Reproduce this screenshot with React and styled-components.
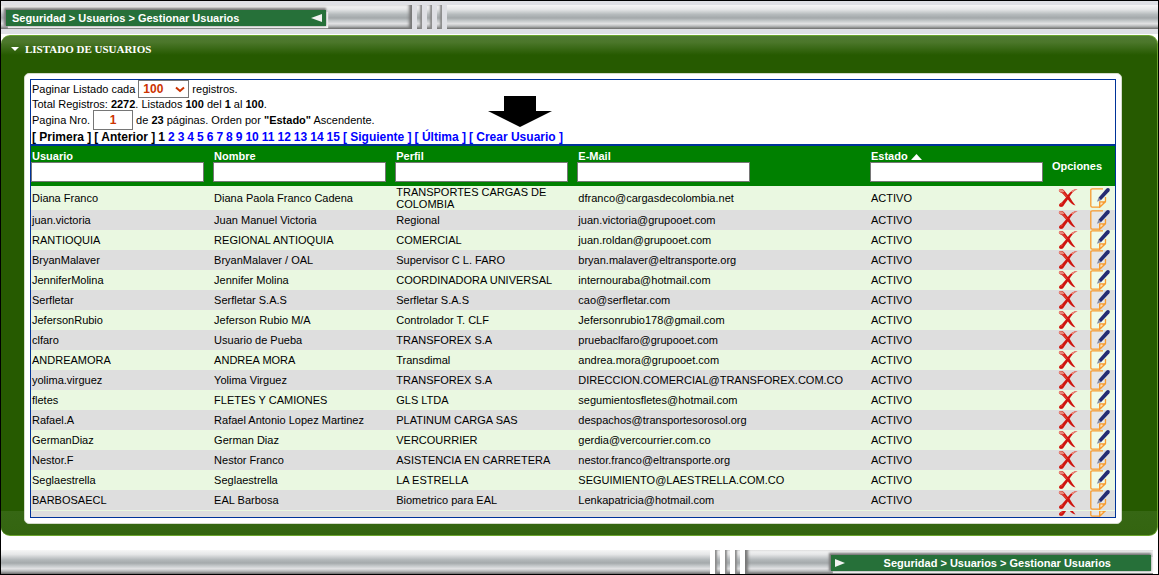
import React, { useState } from "react";
import styled, { createGlobalStyle, css } from "styled-components";

const GlobalStyle = createGlobalStyle`
  *, *::before, *::after { box-sizing: border-box; }
  body {
    margin: 0;
    background: #fff;
    color: #000;
    font: 11px/12px "Liberation Sans", Arial, sans-serif;
  }
`;

const Page = styled.div`
  border: 1px solid #000;
`;

const metal = css`
  background: linear-gradient(
    to bottom,
    #f6f6f6 0%,
    #e6e7e8 18%,
    #b4b9bb 40%,
    #a4a9ab 54%,
    #c4c8ca 66%,
    #e2e2e4 78%,
    #b8babb 88%,
    #6c6c6c 100%
  );
`;

const TopStrip = styled.header`
  display: flex;
  height: 33px;
  padding: 4px 0 5px;
  background: #dfe0e5;
`;

const BottomStrip = styled.footer`
  display: flex;
  height: 24px;
  padding-right: 5px;
`;

const shades = {
  none: "none",
  end: "inset -4px 0 3px -1px #777",
  start: "inset 4px 0 3px -1px #777",
};

const Bar = styled.div`
  ${metal}
  display: flex;
  align-items: flex-start;
  padding: 5px 0 0 5px;
  flex: ${(p) => (p.$width ? `0 0 ${p.$width}px` : "1 0 0")};
  box-shadow: ${(p) => shades[p.$shade || "none"]};
`;

const Ticks = styled.div`
  display: flex;
  gap: 5px;
  padding: 0 5px;
`;

const Tick = styled.span`
  ${metal}
  width: 5px;
  box-shadow: inset ${(p) => (p.$shade === "start" ? "2px" : "-2px")} 0 2px #8c8c8c;
`;

const Crumb = styled.nav`
  display: flex;
  align-items: center;
  justify-content: space-between;
  width: 320px;
  height: 16px;
  padding: ${(p) => (p.$bottom ? "0 40px 0 4px" : "0 3px 0 6px")};
  margin: ${(p) => (p.$bottom ? "0 2px 0 auto" : "0")};
  background: #267039;
  color: #fff;
  font-weight: bold;
  box-shadow: -1px -1px 2px 1px #777, 2px 2px 1px #f4f4f4;
`;

const Panel = styled.main`
  margin: 1px 0 14px;
  padding: 0 35px 11px 23px;
  border: solid #6ca52e;
  border-width: 1px 1px 1px 0;
  border-radius: 9px;
  background:
    linear-gradient(#366714, #346510) bottom / 100% 24px no-repeat,
    linear-gradient(#4f7a30 0, #4c772b 6px, #265a00 19px, #265a00);
`;

const PanelTitle = styled.h1`
  display: flex;
  align-items: center;
  gap: 6px;
  height: 37px;
  margin: 0 0 0 -13px;
  padding-bottom: 11px;
  color: #fff;
  font: bold 11px/12px "Liberation Serif", "Times New Roman", serif;
`;

const Card = styled.section`
  padding: 5px;
  border: 1px solid #d4dccb;
  border-radius: 5px;
  background: #fff;
`;

const Listing = styled.div`
  border: 1px solid #003399;
`;

const Line = styled.div`
  display: flex;
  align-items: center;
  height: ${(p) => p.$height}px;
  padding-left: 1px;
  white-space: pre;
`;

const SelectWrap = styled.span`
  position: relative;
  display: flex;
  margin: 0 3px;
  svg {
    position: absolute;
    right: 4px;
    top: 6px;
    pointer-events: none;
  }
`;

const PageSize = styled.select`
  appearance: none;
  width: 51px;
  height: 18px;
  padding: 0 4px;
  border: 1px solid #767676;
  border-radius: 0;
  background: #fff;
  color: #cc3300;
  font: bold 12px/14px "Liberation Sans", Arial, sans-serif;
`;

const PageNumber = styled.input`
  width: 40px;
  height: 20px;
  margin: 0 3px;
  padding: 0;
  border: 1px solid #767676;
  color: #cc3300;
  text-align: center;
  font: bold 12px/14px "Liberation Sans", Arial, sans-serif;
`;

const Pager = styled.nav`
  display: flex;
  gap: 3px;
  height: 14px;
  padding-left: 1px;
  font: bold 12px/14px "Liberation Sans", Arial, sans-serif;
  white-space: nowrap;
`;

const PagerLink = styled.a`
  position: relative;
  color: #0000ff;
  text-decoration: none;
`;

const Pointer = styled.svg`
  position: absolute;
  left: 19px;
  bottom: 17px;
`;

const Table = styled.table`
  width: 100%;
  table-layout: fixed;
  border-collapse: separate;
  border-spacing: 0;
  border-top: 2px solid #003399;
`;

const HeadCell = styled.th`
  height: 40px;
  padding: 4px 0;
  background: #008000;
  color: #fff;
  text-align: left;
  label { display: block; padding-left: 1px; }
`;

const OptionsHead = styled(HeadCell)`
  padding-left: 2px;
`;

const Filter = styled.input`
  display: block;
  width: calc(100% - 7px);
  max-width: 173px;
  height: 20px;
  padding: 1px 2px;
  border: 1px solid #767676;
  font: 11px/12px "Liberation Sans", Arial, sans-serif;
`;

const Row = styled.tr`
  height: 20px;
  background: #dedede;
  &:nth-child(odd) { background: #eaf8e1; }
`;

const Cell = styled.td`
  padding: 0 0 0 1px;
`;

const Actions = styled.div`
  display: flex;
  justify-content: flex-end;
  gap: 12px;
  height: 20px;
  padding-right: 5px;
`;

const IconButton = styled.button`
  width: 20px;
  height: 20px;
  padding: 0;
  border: 0;
  background: none;
  svg { display: block; }
`;

const CutCell = styled(Cell)`
  border-top: 1px solid #eaf8e1;
  background: #dedede;
`;

const Cut = styled.div`
  display: flex;
  flex-direction: column;
  justify-content: flex-end;
  height: 6px;
  overflow: hidden;
`;

const DeleteIcon = () => (
  <svg width="20" height="20" viewBox="0 0 20 20">
    <path fill="#cf1510" d="M.8 2.500C1.500.8 4.500.6 6 2.200L9.800 7c2.400-3.500 5.200-5.600 9.700-6-3.800 1.700-6.200 4.400-7.900 7.800 1.600 3 3.700 5.800 5.900 8.700-3.300-.4-5.700-3.300-7.600-5.900-1.900 2.200-3 4.300-4.400 6.200-1.300 1.800-4.700 1.500-4.500-.7.300-1.900 2-1.900 3.100-3L8 9.600 4.700 5.800C3.600 4.600 1.200 4.600.8 2.500Z" />
    <path fill="#e98b7d" d="M.8 2.500C1.300 1 4 .8 5.300 2.200L6.500 4C4.800 4.800 1.400 4.700.8 2.500ZM13 3.500c1.700-1.400 3.700-2.300 6.500-2.500-2 .9-3.600 2-4.900 3.400Z" />
    <path fill="#e4402f" d="M2 16.200c.9-1 2-1.200 2.900-1.900.3 1.300-1.300 3-2.900 1.900ZM6 4.500l3.500 4-.8.800L5 5.300Z" />
  </svg>
);

const EditIcon = () => (
  <svg width="20" height="20" viewBox="0 0 20 20">
    <path fill="#fff" fillOpacity=".25" d="M1 1h13v12l-5 6H1Z" />
    <path fill="none" stroke="#f79b2e" strokeWidth="1.300" d="M13 .9H2.200Q.8.900.8 2.200v15.600q0 1.300 1.400 1.300H9.500l6-5.600V9" />
    <path fill="#f79b2e" d="M9 13.200h7v.8l-6.200 6H9Z" />
    <path fill="#fbe3bd" d="M10.400 14.400h2.200v1.400l-2.200 1.600Z" />
    <path fill="#252c73" d="M8.500 9.800 16.300.7Q18-.6 19.300.5q1 1.300 0 2.700l-8.400 9Z" />
    <path fill="#8088a4" d="m8.500 9.800 2.400 2.400-4 1.600Z" />
  </svg>
);

const RowActions = ({ user }) => (
  <Actions>
    <IconButton type="button" aria-label={`Eliminar ${user}`}><DeleteIcon /></IconButton>
    <IconButton type="button" aria-label={`Editar ${user}`}><EditIcon /></IconButton>
  </Actions>
);

const TickGroup = ({ shade }) => (
  <Ticks><Tick $shade={shade} /><Tick $shade={shade} /><Tick $shade={shade} /></Ticks>
);

const columns = [
  ["Usuario", "16.8%"],
  ["Nombre", "16.8%"],
  ["Perfil", "16.8%"],
  ["E-Mail", "27%"],
  ["Estado", "16.6%"],
];

const users = [
  ["Diana Franco", "Diana Paola Franco Cadena", "TRANSPORTES CARGAS DE COLOMBIA", "dfranco@cargasdecolombia.net"],
  ["juan.victoria", "Juan Manuel Victoria", "Regional", "juan.victoria@grupooet.com"],
  ["RANTIOQUIA", "REGIONAL ANTIOQUIA", "COMERCIAL", "juan.roldan@grupooet.com"],
  ["BryanMalaver", "BryanMalaver / OAL", "Supervisor C L. FARO", "bryan.malaver@eltransporte.org"],
  ["JenniferMolina", "Jennifer Molina", "COORDINADORA UNIVERSAL", "internouraba@hotmail.com"],
  ["Serfletar", "Serfletar S.A.S", "Serfletar S.A.S", "cao@serfletar.com"],
  ["JefersonRubio", "Jeferson Rubio M/A", "Controlador T. CLF", "Jefersonrubio178@gmail.com"],
  ["clfaro", "Usuario de Pueba", "TRANSFOREX S.A", "pruebaclfaro@grupooet.com"],
  ["ANDREAMORA", "ANDREA MORA", "Transdimal", "andrea.mora@grupooet.com"],
  ["yolima.virguez", "Yolima Virguez", "TRANSFOREX S.A", "DIRECCION.COMERCIAL@TRANSFOREX.COM.CO"],
  ["fletes", "FLETES Y CAMIONES", "GLS LTDA", "segumientosfletes@hotmail.com"],
  ["Rafael.A", "Rafael Antonio Lopez Martinez", "PLATINUM CARGA SAS", "despachos@transportesorosol.org"],
  ["GermanDiaz", "German Diaz", "VERCOURRIER", "gerdia@vercourrier.com.co"],
  ["Nestor.F", "Nestor Franco", "ASISTENCIA EN CARRETERA", "nestor.franco@eltransporte.org"],
  ["Seglaestrella", "Seglaestrella", "LA ESTRELLA", "SEGUIMIENTO@LAESTRELLA.COM.CO"],
  ["BARBOSAECL", "EAL Barbosa", "Biometrico para EAL", "Lenkapatricia@hotmail.com"],
];

const pages = Array.from({ length: 14 }, (_, i) => i + 2);

export default function App() {
  const [pageNumber, setPageNumber] = useState("1");
  return (
    <Page>
      <GlobalStyle />
      <TopStrip>
        <Bar $width={411} $shade="end">
          <Crumb>
            Seguridad &gt; Usuarios &gt; Gestionar Usuarios
            <svg width="12" height="8"><path d="M0 4 11 0v8Z" fill="#f2f2f2" /></svg>
          </Crumb>
        </Bar>
        <TickGroup shade="end" />
        <Bar />
      </TopStrip>

      <Panel>
        <PanelTitle>
          <svg width="8" height="4"><path d="M0 0h8L4 4Z" fill="#fff" /></svg>
          LISTADO DE USUARIOS
        </PanelTitle>
        <Card>
          <Listing>
            <Line $height={18}>
              <label htmlFor="size">Paginar Listado cada</label>
              <SelectWrap>
                <PageSize id="size" defaultValue="100">
                  <option>50</option>
                  <option>100</option>
                </PageSize>
                <svg width="10" height="7" viewBox="0 0 10 7">
                  <path d="m1 1.500 4 3.500 4-3.500" fill="none" stroke="#cc3300" strokeWidth="2" />
                </svg>
              </SelectWrap>
              registros.
            </Line>
            <Line $height={12}>
              Total Registros: <b>2272</b>. Listados <b>100</b> del <b>1</b> al <b>100</b>.
            </Line>
            <Line $height={20}>
              <label htmlFor="page">Pagina Nro.</label>
              <PageNumber id="page" value={pageNumber} onChange={(e) => setPageNumber(e.target.value)} />
              de <b>23</b> páginas. Orden por <b>"Estado"</b> Ascendente.
            </Line>
            <Pager>
              <span>[ Primera ]</span>
              <span>[ Anterior ]</span>
              <span>1</span>
              {pages.map((n) => <PagerLink key={n} href="#">{n}</PagerLink>)}
              <PagerLink href="#">[ Siguiente ]</PagerLink>
              <PagerLink href="#">[ Última ]</PagerLink>
              <PagerLink href="#">
                [ Crear Usuario ]
                <Pointer width="64" height="31" viewBox="0 0 64 31">
                  <path d="M16 0h32v15h16L32 31 0 15h16Z" />
                </Pointer>
              </PagerLink>
            </Pager>
            <Table>
              <colgroup>
                {columns.map(([name, width]) => <col key={name} width={width} />)}
                <col />
              </colgroup>
              <thead>
                <tr>
                  {columns.map(([name]) => (
                    <HeadCell key={name}>
                      <label htmlFor={name}>
                        {name}
                        {name === "Estado" && (
                          <> <svg width="11" height="6"><path d="M0 6 5.500 0 11 6Z" fill="#fff" /></svg></>
                        )}
                      </label>
                      <Filter id={name} />
                    </HeadCell>
                  ))}
                  <OptionsHead>Opciones</OptionsHead>
                </tr>
              </thead>
              <tbody>
                {users.map(([user, name, profile, mail]) => (
                  <Row key={user}>
                    <Cell>{user}</Cell>
                    <Cell>{name}</Cell>
                    <Cell>{profile}</Cell>
                    <Cell>{mail}</Cell>
                    <Cell>ACTIVO</Cell>
                    <Cell><RowActions user={user} /></Cell>
                  </Row>
                ))}
                <tr>
                  <CutCell colSpan={5} />
                  <CutCell><Cut><RowActions user="siguiente" /></Cut></CutCell>
                </tr>
              </tbody>
            </Table>
          </Listing>
        </Card>
      </Panel>

      <BottomStrip>
        <Bar $width={709} />
        <TickGroup shade="start" />
        <Bar $shade="start">
          <Crumb $bottom>
            <svg width="10" height="8"><path d="M10 4 0 0v8Z" fill="#f2f2f2" /></svg>
            Seguridad &gt; Usuarios &gt; Gestionar Usuarios
          </Crumb>
        </Bar>
      </BottomStrip>
    </Page>
  );
}
